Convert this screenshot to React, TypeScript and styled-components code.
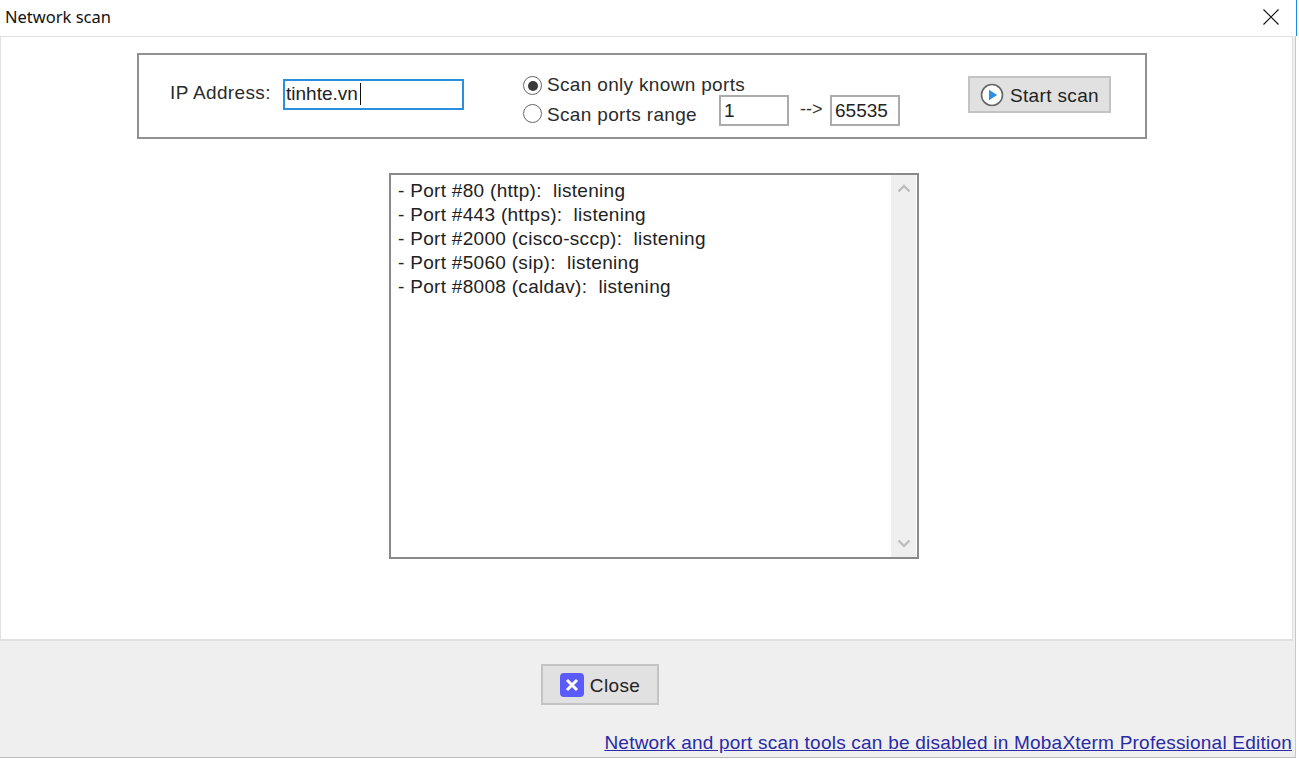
import React from "react";
import styled, { createGlobalStyle } from "styled-components";

const ports = [
  "- Port #80 (http):  listening",
  "- Port #443 (https):  listening",
  "- Port #2000 (cisco-sccp):  listening",
  "- Port #5060 (sip):  listening",
  "- Port #8008 (caldav):  listening",
];

const GlobalStyle = createGlobalStyle`
  html, body {
    margin: 0;
    padding: 0;
    background: #fff;
    overflow: hidden;
  }
  body {
    font-family: "Liberation Sans", Arial, sans-serif;
    color: #1a1a1a;
  }
`;

const Page = styled.div`
  width: 1299px;
  height: 759px;
  display: flex;
  flex-direction: column;
  align-items: flex-start;
`;

const Dialog = styled.div`
  width: 1295px;
  height: 757px;
  display: flex;
  flex-direction: column;
  background: #efefef;
  border-right: 1px solid #c9c9c9;
  border-bottom: 1px solid #bdbdbd;
`;

const TitleBar = styled.div`
  height: 36px;
  flex: none;
  display: flex;
  align-items: center;
  justify-content: space-between;
  padding: 0 17px 3px 5px;
  background: #fff;
  box-sizing: border-box;
  border-right: 1px solid #1e88e5;
  margin-right: -2px;
  font-family: "Noto Sans", "Open Sans", sans-serif;
  font-size: 16.5px;
  color: #111;
`;

const ClosePlain = styled.svg`
  width: 16px;
  height: 16px;
  display: block;
`;

const Panel = styled.div`
  height: 605px;
  flex: none;
  box-sizing: border-box;
  background: #fff;
  border: 1px solid #e0e0e0;
  border-width: 1px 1px 2px 1px;
  margin-right: 2px;
  padding: 16px 0 0 136px;
  display: flex;
  flex-direction: column;
  align-items: flex-start;
`;

const ScanBox = styled.div`
  width: 1010px;
  height: 86px;
  box-sizing: border-box;
  border: 2px solid #909090;
  padding-left: 31px;
  display: flex;
  align-items: flex-start;
`;

const FieldLabel = styled.span`
  font-size: 19px;
  letter-spacing: 0.36px;
  line-height: 22px;
  margin-top: 27px;
  width: 113px;
  flex: none;
  color: #2b2b2b;
`;

const TextBox = styled.div<{ $w: number; $focus?: boolean }>`
  width: ${(p) => p.$w}px;
  height: 31px;
  box-sizing: border-box;
  flex: none;
  border: ${(p) => (p.$focus ? "2px solid #2b8ee0" : "2px solid #ababab")};
  background: #fff;
  padding-left: ${(p) => (p.$focus ? 1 : 3)}px;
  padding-bottom: ${(p) => (p.$focus ? 2 : 0)}px;
  font-size: 19px;
  line-height: 25px;
  color: #222;
  display: flex;
  align-items: center;
`;

const Caret = styled.span`
  width: 1px;
  height: 22px;
  background: #111;
  margin-left: 2px;
`;

const IpBox = styled(TextBox)`
  margin-top: 24px;
`;

const ScanOptions = styled.div`
  margin-left: 59px;
  margin-top: 21px;
  display: flex;
  flex-direction: column;
  width: 445px;
  flex: none;
`;

const OptionRow = styled.div`
  height: 19px;
  display: flex;
  align-items: flex-start;
`;

const RangeRow = styled(OptionRow)`
  height: 31px;
`;

const Radio = styled.span<{ $on?: boolean }>`
  width: 19px;
  height: 19px;
  box-sizing: border-box;
  flex: none;
  border: 1.5px solid #666;
  border-radius: 50%;
  background: #fff;
  display: flex;
  align-items: center;
  justify-content: center;
  &::after {
    content: "";
    display: ${(p) => (p.$on ? "block" : "none")};
    width: 10px;
    height: 10px;
    border-radius: 50%;
    background: #3a3a3a;
  }
`;

const OptionLabel = styled.span`
  font-size: 19px;
  letter-spacing: 0.33px;
  line-height: 19px;
  margin-left: 5px;
  margin-top: -1px;
  white-space: nowrap;
  color: #2b2b2b;
`;

const RangeRadio = styled(Radio)`
  margin-top: 9px;
`;

const RangeLabel = styled(OptionLabel)`
  width: 172px;
  flex: none;
  margin-top: 10px;
`;

const Arrow = styled.span`
  width: 41px;
  flex: none;
  font-size: 18px;
  line-height: 29px;
  padding-left: 11px;
  box-sizing: border-box;
  color: #333;
`;

const ActionButton = styled.div<{ $w: number; $h: number }>`
  width: ${(p) => p.$w}px;
  height: ${(p) => p.$h}px;
  box-sizing: border-box;
  flex: none;
  background: #e1e1e1;
  border: 2px solid #c3c3c3;
  display: flex;
  align-items: center;
  justify-content: center;
  gap: 6px;
  font-size: 19px;
  letter-spacing: 0.35px;
  color: #222;
`;

const ButtonLabel = styled.span`
  margin-top: 2px;
`;

const StartButton = styled(ActionButton)`
  margin-top: 21px;
`;

const ListRow = styled.div`
  margin: 34px 0 0 252px;
  width: 530px;
  height: 386px;
  box-sizing: border-box;
  border: 2px solid #8a8a8a;
  display: flex;
`;

const PortList = styled.div`
  flex: 1;
  padding: 4px 0 0 7px;
`;

const PortLine = styled.div`
  font-size: 19px;
  letter-spacing: 0.3px;
  line-height: 24px;
  white-space: pre;
  color: #222;
`;

const ScrollBar = styled.div`
  width: 25px;
  flex: none;
  background: #efefef;
  margin-right: 1px;
  display: flex;
  flex-direction: column;
  justify-content: space-between;
  align-items: center;
  padding: 9px 0;
`;

const ScrollArrow = styled.svg`
  width: 14px;
  height: 9px;
  display: block;
`;

const Footer = styled.div`
  flex: 1;
  display: flex;
  flex-direction: column;
  padding-top: 23px;
  box-sizing: border-box;
`;

const CloseButton = styled(ActionButton)`
  margin-left: 541px;
`;

const CloseIcon = styled.span`
  width: 24px;
  height: 24px;
  background: #5b5bfb;
  border-radius: 4px;
  display: flex;
  align-items: center;
  justify-content: center;
`;

const UpgradeLink = styled.a`
  margin-top: auto;
  margin-bottom: 2px;
  align-self: flex-end;
  margin-right: 3px;
  font-size: 19px;
  letter-spacing: 0.22px;
  line-height: 24px;
  color: #2a2aa6;
  text-decoration: underline;
  white-space: nowrap;
`;

const App: React.FC = () => {
  return (
    <Page>
      <GlobalStyle />
      <Dialog>
        <TitleBar>
          <span>Network scan</span>
          <ClosePlain viewBox="0 0 16 16">
            <path d="M0.5 0.5L15.5 15.5M15.5 0.5L0.5 15.5" stroke="#111" strokeWidth="1.1" fill="none" />
          </ClosePlain>
        </TitleBar>
        <Panel>
          <ScanBox>
            <FieldLabel>IP Address:</FieldLabel>
            <IpBox $w={181} $focus>
              tinhte.vn
              <Caret />
            </IpBox>
            <ScanOptions>
              <OptionRow>
                <Radio $on />
                <OptionLabel>Scan only known ports</OptionLabel>
              </OptionRow>
              <RangeRow>
                <RangeRadio />
                <RangeLabel>Scan ports range</RangeLabel>
                <TextBox $w={70}>1</TextBox>
                <Arrow>--&gt;</Arrow>
                <TextBox $w={70}>65535</TextBox>
              </RangeRow>
            </ScanOptions>
            <StartButton $w={143} $h={37}>
              <svg width="24" height="24" viewBox="0 0 24 24">
                <circle cx="12" cy="12" r="10.5" fill="#fff" stroke="#666" strokeWidth="1.6" />
                <path d="M9 6.8L17.2 12L9 17.2Z" fill="#2f8fe6" />
              </svg>
              <ButtonLabel>Start scan</ButtonLabel>
            </StartButton>
          </ScanBox>
          <ListRow>
            <PortList>
              {ports.map((line) => (
                <PortLine key={line}>{line}</PortLine>
              ))}
            </PortList>
            <ScrollBar>
              <ScrollArrow viewBox="0 0 14 9">
                <path d="M1.5 7.5L7 2L12.5 7.5" stroke="#bdbdbd" strokeWidth="2.4" fill="none" />
              </ScrollArrow>
              <ScrollArrow viewBox="0 0 14 9">
                <path d="M1.5 1.5L7 7L12.5 1.5" stroke="#bdbdbd" strokeWidth="2.4" fill="none" />
              </ScrollArrow>
            </ScrollBar>
          </ListRow>
        </Panel>
        <Footer>
          <CloseButton $w={118} $h={41}>
            <CloseIcon>
              <svg width="14" height="14" viewBox="0 0 14 14">
                <path d="M2 2L12 12M12 2L2 12" stroke="#fff" strokeWidth="3" fill="none" />
              </svg>
            </CloseIcon>
            <ButtonLabel>Close</ButtonLabel>
          </CloseButton>
          <UpgradeLink>Network and port scan tools can be disabled in MobaXterm Professional Edition</UpgradeLink>
        </Footer>
      </Dialog>
    </Page>
  );
};

export default App;
